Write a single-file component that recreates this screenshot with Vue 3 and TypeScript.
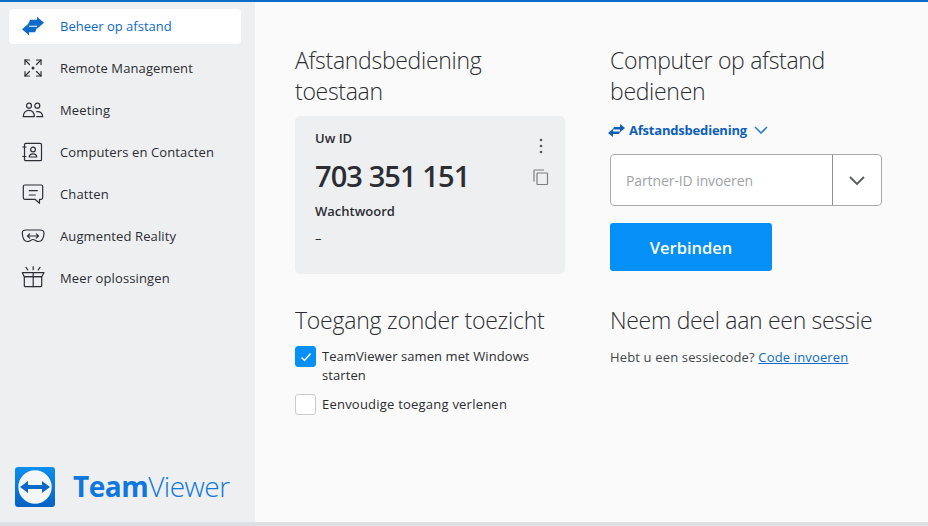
<template>
  <div class="app">
    <div class="app__top" />
    <div class="app__body">
      <aside class="side">
        <nav class="side__nav">
          <a v-for="item in navItems" :key="item.label" class="side__item" :class="{ 'side__item--active': item.active }">
            <span class="side__icon">
              <svg width="26" height="26" viewBox="0 0 26 26" fill="none" :stroke="item.active ? 'none' : '#2b2f36'" stroke-width="1.2" stroke-linecap="round" stroke-linejoin="round">
                <template v-if="item.icon === 'swap'">
                  <path d="M7.500 12.800L10 6.800H17V3.800L24 9.800L17 15.800V12.800Z" fill="#0e6ac8" />
                  <path d="M17.500 13.800L15 19.200H9V22.200L2 16.200L9 10.200V13.800Z" fill="#0e6ac8" />
                </template>
                <template v-else-if="item.icon === 'remote'">
                  <path d="M5 5l4.500 4.500M21 5l-4.500 4.500M5 21l4.500-4.500M21 21l-4.500-4.500" />
                  <path d="M5 9.500V5h4.500M16.500 5H21v4.500M5 16.500V21h4.500M16.500 21H21v-4.500" />
                  <circle cx="13" cy="13" r="1.500" fill="#2b2f36" stroke="none" />
                </template>
                <template v-else-if="item.icon === 'meeting'">
                  <circle cx="9" cy="8.700" r="2.500" />
                  <circle cx="17.300" cy="8.700" r="2.500" />
                  <path d="M3.300 19.700c0-3.900 2.300-6.300 5.500-6.300s5.500 2.400 5.500 6.300z" />
                  <path d="M16.700 14.700c3.500-.500 6 1.500 6 5h-6" />
                </template>
                <template v-else-if="item.icon === 'contacts'">
                  <rect x="4.500" y="4.300" width="17" height="17.400" rx="1.300" />
                  <circle cx="13" cy="10.500" r="2.400" />
                  <path d="M9.300 18c0-2 1.600-3.200 3.700-3.200s3.700 1.200 3.700 3.200z" />
                  <path d="M2.700 8h3.300M2.700 17.500h3.300" />
                </template>
                <template v-else-if="item.icon === 'chat'">
                  <path d="M4.800 4h16.400a1.500 1.500 0 0 1 1.500 1.500v11.300a1.500 1.500 0 0 1-1.500 1.500h-1.700v4l-4.500-4H4.800a1.500 1.500 0 0 1-1.500-1.500V5.500A1.500 1.500 0 0 1 4.800 4z" />
                  <path d="M9.300 9.700h8M9.300 14h6" />
                </template>
                <template v-else-if="item.icon === 'ar'">
                  <path d="M6 7h14c2.800 0 4.200 1.300 4 3.500-.300 4-2 8-5.500 8-2.500 0-3.500-2-5.500-2s-3 2-5.500 2C4 18.500 2.600 14.500 2.300 10.500 2.100 8.300 3.200 7 6 7z" />
                  <path d="M7.500 13h11M7.500 13l2.200-2.200M7.500 13l2.200 2.200M18.500 13l-2.200-2.200M18.500 13l-2.200 2.200" />
                </template>
                <template v-else>
                  <path d="M4.300 11.700h17.400v9a1 1 0 0 1-1 1H5.300a1 1 0 0 1-1-1z" />
                  <path d="M2.300 7.700h21.700l-2.300 4H4.300z" />
                  <path d="M13.200 7.700v14" />
                  <path d="M13.200 1.700v3M6 2.300l1.800 2.700M20 2.300l-1.800 2.700" />
                </template>
              </svg>
            </span>
            <span>{{ item.label }}</span>
          </a>
        </nav>
        <div class="brand">
          <svg class="brand__mark" width="40" height="40" viewBox="0 0 40 40">
            <defs>
              <linearGradient id="tv-bg" x1="0" y1="0" x2="0" y2="1">
                <stop offset="0" stop-color="#0e8fee" />
                <stop offset="1" stop-color="#0561c4" />
              </linearGradient>
            </defs>
            <rect width="40" height="40" rx="3" fill="url(#tv-bg)" />
            <circle cx="20" cy="20" r="16.700" fill="#f4f6f8" />
            <path d="M5 20l8-6v4h14v-4l8 6-8 6v-4H13v4z" fill="#0e6ac8" />
          </svg>
          <span class="brand__name"><b>Team</b>Viewer</span>
        </div>
      </aside>

      <main class="main">
        <section class="col">
          <h2 class="title">Afstandsbediening toestaan</h2>
          <div class="card">
            <div class="card__head">
              <div class="card__label">Uw ID</div>
              <svg width="4" height="16" viewBox="0 0 4 16" class="card__more">
                <circle cx="2" cy="2" r="1.300" />
                <circle cx="2" cy="8" r="1.300" />
                <circle cx="2" cy="14" r="1.300" />
              </svg>
            </div>
            <div class="card__row">
              <div class="card__id">703 351 151</div>
              <svg width="16" height="17" viewBox="0 0 16 17" fill="none" stroke="#7b7e83" stroke-width="1.200">
                <path d="M1 12.500V1.600a.6.6 0 0 1 .6-.6H11" />
                <rect x="4" y="4" width="10.500" height="11.500" rx=".5" />
              </svg>
            </div>
            <div class="card__label card__label--pw">Wachtwoord</div>
            <div class="card__dash">–</div>
          </div>
        </section>

        <section class="col">
          <h2 class="title">Computer op afstand bedienen</h2>
          <div class="mode">
            <svg width="17" height="13" viewBox="0 0 17 13" fill="#0e5fb8">
              <path d="M6 3h6V0l5 4-5 4.200V5.600H4.800z" />
              <path d="M11 10H5v3L0 9l5-4.200v2.600h7.200z" />
            </svg>
            <span>Afstandsbediening</span>
            <svg width="14" height="8" viewBox="0 0 14 8" fill="none" stroke="#2f7fc9" stroke-width="1.600">
              <path d="M1 1l6 6 6-6" />
            </svg>
          </div>
          <div class="partner">
            <span class="partner__input">Partner-ID invoeren</span>
            <span class="partner__drop">
              <svg width="16" height="9" viewBox="0 0 16 9" fill="none" stroke="#55585c" stroke-width="1.800">
                <path d="M1 1l7 7 7-7" />
              </svg>
            </span>
          </div>
          <button class="connect">Verbinden</button>
        </section>

        <section class="col">
          <h2 class="title">Toegang zonder toezicht</h2>
          <label class="check">
            <span class="check__box check__box--on">
              <svg width="12" height="10" viewBox="0 0 12 10" fill="none" stroke="#fff" stroke-width="1.500">
                <path d="M1.500 5.500l3 3 6-7" />
              </svg>
            </span>
            <span class="check__text">TeamViewer samen met Windows starten</span>
          </label>
          <label class="check">
            <span class="check__box" />
            <span class="check__text check__text--wide">Eenvoudige toegang verlenen</span>
          </label>
        </section>

        <section class="col">
          <h2 class="title">Neem deel aan een sessie</h2>
          <p class="session">Hebt u een sessiecode? <a class="session__link">Code invoeren</a></p>
        </section>
      </main>
    </div>
    <div class="app__foot" />
  </div>
</template>

<script setup lang="ts">
const navItems = [
  { label: 'Beheer op afstand', icon: 'swap', active: true },
  { label: 'Remote Management', icon: 'remote' },
  { label: 'Meeting', icon: 'meeting' },
  { label: 'Computers en Contacten', icon: 'contacts' },
  { label: 'Chatten', icon: 'chat' },
  { label: 'Augmented Reality', icon: 'ar' },
  { label: 'Meer oplossingen', icon: 'gift' },
];
</script>

<style>
html,
body {
  margin: 0;
  overflow: hidden;
}
</style>

<style scoped>
.app {
  display: flex;
  flex-direction: column;
  width: 928px;
  height: 526px;
  background: #fafafa;
  color: #2b2d33;
  font-family: "Open Sans", "Noto Sans", sans-serif;
  font-size: 13px;
}

.app__top {
  height: 2px;
  background: #0e6ac8;
}

.app__body {
  flex: 1;
  display: flex;
  min-height: 0;
}

.app__foot {
  height: 4px;
  background: #dde1e4;
}

.side {
  width: 255px;
  flex: none;
  display: flex;
  flex-direction: column;
  justify-content: space-between;
  background: #eeeff1;
}

.side__nav {
  display: flex;
  flex-direction: column;
  gap: 7px;
  padding: 7px 14px 0 9px;
}

.side__item {
  box-sizing: border-box;
  display: flex;
  align-items: center;
  gap: 14px;
  height: 35px;
  padding: 0 0 2px 11px;
  border-radius: 4px;
  letter-spacing: 0.12px;
}

.side__item--active {
  background: #fff;
  color: #0e6ac8;
  letter-spacing: 0;
}

.side__icon {
  display: flex;
  width: 26px;
  height: 26px;
}

.brand {
  display: flex;
  align-items: center;
  gap: 18px;
  padding: 0 0 15px 15px;
}

.brand__name {
  margin-top: -2px;
  color: #1078dc;
  font-size: 28px;
  line-height: 40px;
  font-weight: 300;
  letter-spacing: -0.5px;
}

.brand__name b {
  font-weight: 700;
}

.main {
  flex: 1;
  display: grid;
  grid-template-columns: 270px 272px;
  grid-template-rows: 260px auto;
  column-gap: 45px;
  align-content: start;
  padding: 43px 0 0 40px;
}

.title {
  margin: 0;
  font-size: 23px;
  line-height: 31px;
  font-weight: 300;
  letter-spacing: -0.3px;
  width: 230px;
}

.col:nth-child(2) .title {
  width: 260px;
}

.col:nth-child(n + 3) .title {
  width: auto;
  white-space: nowrap;
}

.col:nth-child(3) .title {
  letter-spacing: -0.22px;
}

.card {
  box-sizing: border-box;
  height: 158px;
  margin-top: 9px;
  padding: 12px 20px;
  background: #eeeff1;
  border-radius: 5px;
}

.card__head,
.card__row {
  display: flex;
  justify-content: space-between;
}

.card__head {
  align-items: flex-start;
  height: 24px;
  padding-right: 2px;
}

.card__more {
  margin-top: 10px;
  fill: #55585c;
}

.card__row {
  align-items: center;
  height: 42px;
  margin-top: 2px;
}

.card__row svg {
  margin: 4px -4px 0 0;
}

.card__label {
  font-size: 13px;
  font-weight: 600;
  line-height: 20px;
}

.card__label--pw {
  margin-top: 5px;
}

.card__id {
  font-size: 29px;
  font-weight: 600;
  color: #2b2d33;
  letter-spacing: -0.9px;
  white-space: nowrap;
}

.card__dash {
  margin-top: 7px;
  line-height: 20px;
}

.mode {
  display: flex;
  align-items: center;
  gap: 4px;
  height: 20px;
  margin: 13px 0 0 -2px;
  color: #0e5fb8;
  font-weight: 700;
  font-size: 13px;
  letter-spacing: -0.2px;
}

.mode svg:last-child {
  margin-left: 3px;
}

.partner {
  display: flex;
  box-sizing: border-box;
  height: 52px;
  margin-top: 14px;
  background: #fff;
  border: 1px solid #a9abad;
  border-radius: 4px;
}

.partner__input {
  flex: 1;
  display: flex;
  align-items: center;
  padding-left: 15px;
  color: #a0a2a5;
  font-size: 14px;
  letter-spacing: -0.1px;
}

.partner__drop {
  width: 48px;
  display: flex;
  align-items: center;
  justify-content: center;
  border-left: 1px solid #8f9194;
}

.connect {
  display: block;
  width: 162px;
  height: 48px;
  margin-top: 17px;
  padding: 0;
  border: 0;
  border-radius: 3px;
  background: #0590f8;
  color: #fff;
  font: 600 16.5px "Open Sans", "Noto Sans", sans-serif;
}

.check {
  display: flex;
  gap: 6px;
  width: 240px;
  line-height: 19px;
  margin-bottom: 8px;
}

.check + .check {
  margin-top: 9px;
}

.title + .check {
  margin-top: 10px;
}

.check__text {
  padding-top: 1px;
  letter-spacing: 0.08px;
}

.check__text--wide {
  letter-spacing: 0.22px;
}

.check__box {
  box-sizing: border-box;
  flex: none;
  display: flex;
  align-items: center;
  justify-content: center;
  width: 21px;
  height: 21px;
  background: #fff;
  border: 1px solid #c9cbce;
  border-radius: 3px;
}

.check__box--on {
  background: #0590f8;
  border-color: #0590f8;
}

.session {
  margin: 11px 0 0;
  color: #44474c;
  line-height: 20px;
  letter-spacing: 0.15px;
  white-space: nowrap;
}

.session__link {
  color: #0e6ac8;
  text-decoration: underline;
}
</style>
